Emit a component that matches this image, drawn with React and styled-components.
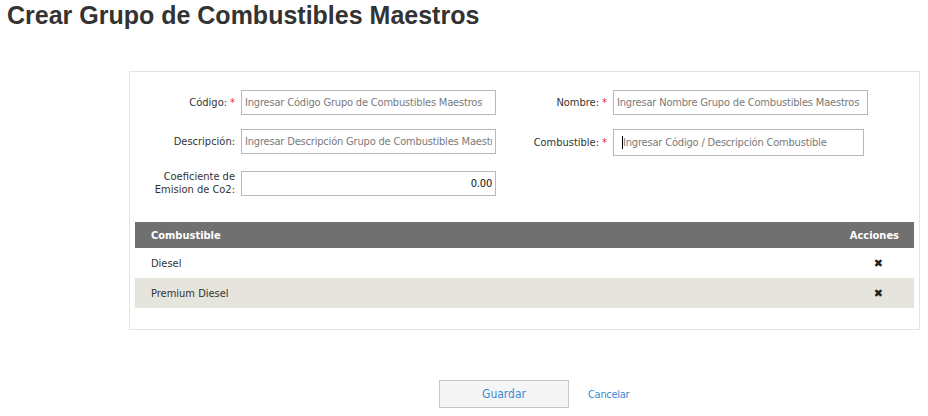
import React from "react";
import styled, { createGlobalStyle } from "styled-components";

const Global = createGlobalStyle`
  html, body { margin: 0; padding: 0; background: #fff; }
  body { font-family: "DejaVu Sans Condensed", "DejaVu Sans", sans-serif; font-size: 11px; color: #333; }
  * { box-sizing: border-box; }
`;

const Page = styled.div`
  width: 928px;
  height: 416px;
  overflow: hidden;
`;

const Title = styled.h1`
  margin: 0;
  padding: 1px 0 0 7px;
  font-family: "Liberation Sans", Arial, sans-serif;
  font-weight: bold;
  font-size: 25px;
  line-height: 28px;
  color: #333;
`;

const Panel = styled.div`
  margin: 42px 0 0 129px;
  width: 791px;
  border: 1px solid #e4e4de;
  padding: 18px 5px 21px 5px;
`;

const FormGrid = styled.div`
  display: grid;
  grid-template-columns: 361px 361px;
  column-gap: 11px;
  row-gap: 14px;
  align-items: start;
`;

const Field = styled.div`
  display: flex;
  align-items: center;
  gap: 6px;
`;

const Label = styled.label`
  width: 100px;
  flex: none;
  text-align: right;
  color: #333;
  line-height: 13px;
`;

const Star = styled.span`
  color: #e8262b;
  margin-left: 3px;
`;

const Input = styled.input`
  width: ${(p) => p.$w || 255}px;
  height: ${(p) => p.$h || 25}px;
  border: 1px solid #b8b8b8;
  padding: 0 ${(p) => (p.$pl ? 4 : 3)}px 0 ${(p) => p.$pl || 3}px;
  font-family: inherit;
  font-size: 11px;
  letter-spacing: -0.18px;
  color: #111;
  text-align: ${(p) => (p.$right ? "right" : "left")};
  outline: none;
  &::placeholder { color: #7a7a7a; opacity: 1; }
`;

const InputWrap = styled.div`
  position: relative;
`;

const Caret = styled.span`
  position: absolute;
  left: 9px;
  top: 7px;
  width: 1px;
  height: 13px;
  background: #000;
`;

const Table = styled.div`
  margin-top: 26px;
  width: 779px;
`;

const HeadRow = styled.div`
  display: flex;
  align-items: center;
  height: 26px;
  background: #707070;
  color: #fff;
  font-weight: bold;
  padding: 0 15px 0 16px;
`;

const Row = styled.div`
  display: flex;
  align-items: center;
  height: 30px;
  background: ${(p) => (p.$alt ? "#e5e5dd" : "#fff")};
  padding: 0 31px 0 16px;
  color: #333;
`;

const Cell = styled.div`
  flex: 1;
`;

const Remove = styled.span`
  font-family: "DejaVu Sans", sans-serif;
  font-weight: bold;
  font-size: 11px;
  color: #222;
`;

const Actions = styled.div`
  display: flex;
  align-items: center;
  gap: 19px;
  margin: 50px 0 0 439px;
`;

const SaveButton = styled.button`
  width: 130px;
  height: 28px;
  background: #f5f5f5;
  border: 1px solid #c8c8c8;
  color: #3a8bd0;
  font-family: inherit;
  font-size: 12px;
  cursor: pointer;
`;

const CancelLink = styled.a`
  color: #3a8bd0;
  font-size: 11px;
  letter-spacing: -0.3px;
  text-decoration: none;
  cursor: pointer;
`;

const rows = ["Diesel", "Premium Diesel"];

export default function App() {
  return (
    <Page>
      <Global />
      <Title>Crear Grupo de Combustibles Maestros</Title>
      <Panel>
        <FormGrid>
          <Field>
            <Label>Código:<Star>*</Star></Label>
            <Input placeholder="Ingresar Código Grupo de Combustibles Maestros" />
          </Field>
          <Field>
            <Label>Nombre:<Star>*</Star></Label>
            <Input placeholder="Ingresar Nombre Grupo de Combustibles Maestros" />
          </Field>
          <Field>
            <Label>Descripción:</Label>
            <Input placeholder="Ingresar Descripción Grupo de Combustibles Maestros" />
          </Field>
          <Field>
            <Label>Combustible:<Star>*</Star></Label>
            <InputWrap>
              <Input $w={251} $h={27} $pl={9} placeholder="Ingresar Código / Descripción Combustible" />
              <Caret />
            </InputWrap>
          </Field>
          <Field>
            <Label>Coeficiente de<br />Emision de Co2:</Label>
            <Input $right defaultValue="0.00" />
          </Field>
        </FormGrid>
        <Table>
          <HeadRow>
            <Cell>Combustible</Cell>
            <div>Acciones</div>
          </HeadRow>
          {rows.map((r, i) => (
            <Row key={r} $alt={i % 2 === 1}>
              <Cell>{r}</Cell>
              <Remove>✖</Remove>
            </Row>
          ))}
        </Table>
      </Panel>
      <Actions>
        <SaveButton>Guardar</SaveButton>
        <CancelLink>Cancelar</CancelLink>
      </Actions>
    </Page>
  );
}
